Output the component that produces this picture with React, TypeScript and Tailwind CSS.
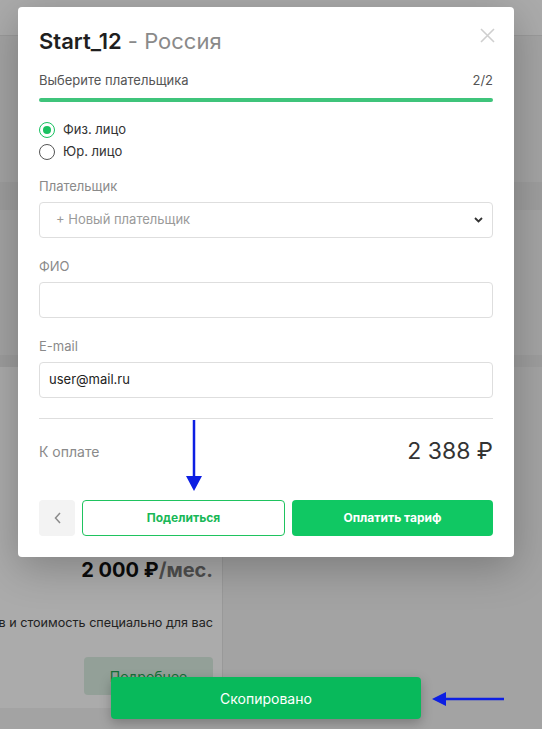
import {useState} from 'react';

// backdrop page under the dim overlay
const Backdrop = () => (
  <div className="flex flex-col w-full h-full bg-[#f4f4f4]">
    <div className="h-[36px] bg-white border-b border-[#e6e6e6]" />
    <div className="h-[146px]" />
    <div className="h-[28px] bg-[#ebebeb]" />
    <div className="h-[145px]" />
    <div className="h-[12px] bg-[#ebebeb]" />
    <div className="flex">
      <div className="w-[223px] h-[341px] bg-white border-r border-[#e4e4e4] pr-[9px] pt-[189px]">
        <div className="flex justify-end items-baseline text-[20px] leading-[28px] font-bold">
          <span className="text-[#111]">2 000 ₽</span>
          <span className="text-[#777]">/мес.</span>
        </div>
        <div className="mt-[29px] flex justify-end whitespace-nowrap text-[12.6px] leading-[20px] text-[#333]">
          в и стоимость специально для вас
        </div>
        <div className="mt-[24px] flex justify-end">
          <div className="w-[129px] h-[38px] rounded-[4px] bg-[#dcefe3] text-[#20a552] text-[14px] flex items-center justify-center">
            Подробнее
          </div>
        </div>
      </div>
      <div className="flex-1" />
    </div>
  </div>
);

const Radio = ({checked, label}: {checked: boolean; label: string}) => (
  <div className="flex items-center h-[20px] gap-[8px]">
    <div
      className={
        checked
          ? 'w-[16px] h-[16px] rounded-full border border-[#19c160] flex items-center justify-center'
          : 'w-[16px] h-[16px] rounded-full border border-[#555]'
      }>
      {checked && <div className="w-[8px] h-[8px] rounded-full bg-[#19c160]" />}
    </div>
    <span className="text-[13px] text-[#333]">{label}</span>
  </div>
);

const Label = ({children, className}: {children: string; className: string}) => (
  <div className={`text-[13px] leading-[16px] text-[#8a8a8a] ${className}`}>{children}</div>
);

export default function App() {
  const [payer] = useState<'fiz' | 'yur'>('fiz');

  return (
    <div className="relative w-[542px] h-[729px] overflow-hidden font-['Inter',sans-serif]">
      <Backdrop />
      <div className="absolute inset-0 bg-black/[0.33]" />

      {/* modal */}
      <div className="absolute left-[18px] top-[7px] w-[496px] bg-white rounded-[4px] shadow-[0_10px_40px_rgba(0,0,0,0.25)] px-[21px] pt-[20px] pb-[21px]">
        <div className="text-[22px] leading-[28px]">
          <span className="font-semibold text-[#1f1f1f]">Start_12</span>
          <span className="text-[#8a8a8a]"> - Россия</span>
        </div>
        <svg
          className="absolute right-[19px] top-[21px]"
          width="15"
          height="15"
          viewBox="0 0 15 15">
          <path d="M1 1L14 14M14 1L1 14" stroke="#cfcfcf" strokeWidth="1.6" />
        </svg>

        <div className="mt-[17px] flex justify-between text-[13px] leading-[16px] text-[#555]">
          <span>Выберите плательщика</span>
          <span>2/2</span>
        </div>
        <div className="mt-[10px] h-[4px] rounded-full bg-[#3fc47b]" />

        <div className="mt-[18px] flex flex-col gap-[2px]">
          <Radio checked={payer === 'fiz'} label="Физ. лицо" />
          <Radio checked={payer === 'yur'} label="Юр. лицо" />
        </div>

        <Label className="mt-[16px]">Плательщик</Label>
        <div className="mt-[8px] h-[36px] border border-[#dedede] rounded-[4px] flex items-center justify-between pl-[16px] pr-[9px]">
          <span className="text-[13px] text-[#9a9a9a]">+ Новый плательщик</span>
          <svg width="9" height="6" viewBox="0 0 9 6">
            <path d="M1 1L4.5 4.5L8 1" fill="none" stroke="#333" strokeWidth="1.8" />
          </svg>
        </div>

        <Label className="mt-[20px]">ФИО</Label>
        <div className="mt-[8px] h-[36px] border border-[#dedede] rounded-[4px]" />

        <Label className="mt-[20px]">E-mail</Label>
        <div className="mt-[8px] h-[36px] border border-[#dedede] rounded-[4px] flex items-center pl-[9px] text-[13px] text-[#222]">
          user@mail.ru
        </div>

        <div className="mt-[20px] h-px bg-[#dedede]" />

        <div className="mt-[18px] h-[28px] flex items-center justify-between">
          <span className="text-[14px] text-[#8a8a8a]">К оплате</span>
          <span className="text-[23px] text-[#333]">2 388 ₽</span>
        </div>

        <div className="mt-[35px] h-[36px] flex gap-[7px]">
          <div className="w-[36px] rounded-[4px] bg-[#f3f3f3] flex items-center justify-center">
            <svg width="7" height="12" viewBox="0 0 7 12">
              <path d="M6 1L1.5 6L6 11" fill="none" stroke="#8a8a8a" strokeWidth="1.5" />
            </svg>
          </div>
          <div className="flex-1 rounded-[4px] border border-[#1fc35f] flex items-center justify-center text-[12px] font-bold text-[#19b857]">
            Поделиться
          </div>
          <div className="flex-1 rounded-[4px] bg-[#10c863] flex items-center justify-center text-[12px] font-bold text-white">
            Оплатить тариф
          </div>
        </div>
      </div>

      {/* toast */}
      <div className="absolute left-[111px] top-[677px] w-[310px] h-[42px] rounded-[4px] bg-[#08b95b] shadow-[0_4px_12px_rgba(0,0,0,0.25)] flex items-center justify-center text-[14px] text-white">
        Скопировано
      </div>

      {/* annotation arrows */}
      <svg className="absolute left-[184px] top-[420px]" width="20" height="72" viewBox="0 0 20 72">
        <path d="M10 0V58" stroke="#0d1fe3" strokeWidth="2.5" />
        <path d="M2 56L18 56L10 71Z" fill="#0d1fe3" />
      </svg>
      <svg className="absolute left-[432px] top-[690px]" width="72" height="18" viewBox="0 0 72 18">
        <path d="M12 9H72" stroke="#0d1fe3" strokeWidth="2.5" />
        <path d="M14 2L14 16L0 9Z" fill="#0d1fe3" />
      </svg>
    </div>
  );
}
